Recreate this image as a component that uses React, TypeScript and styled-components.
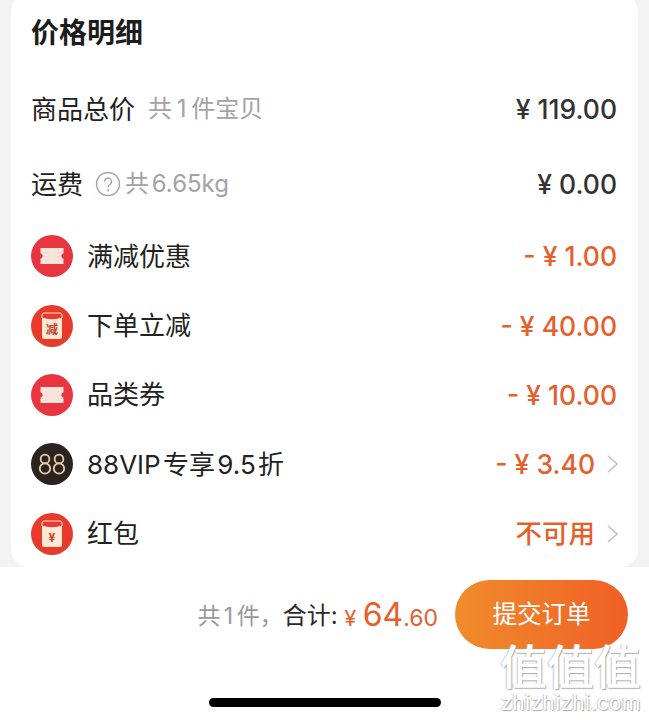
import { ReactNode } from "react";
import styled, { createGlobalStyle } from "styled-components";

const GlobalStyle = createGlobalStyle`
  html, body {
    margin: 0;
    padding: 0;
    background: #fff;
  }
  * { box-sizing: border-box; }
`;

const FONT = `Inter, "Noto Sans CJK SC", sans-serif`;

const Page = styled.div`
  position: relative;
  width: 649px;
  height: 720px;
  overflow: hidden;
  background: #fff;
  font-family: ${FONT};
  color: #222;
`;

const CardArea = styled.div`
  height: 567px;
  padding: 0 11px;
  background: #f3f3f3;
  overflow: hidden;
`;

const Card = styled.section`
  height: 573px;
  margin-top: -6px;
  padding: 6px 21px 0 20px;
  background: #fff;
  border-radius: 18px;
  display: flex;
  flex-direction: column;
`;

const Title = styled.h2`
  height: 71.5px;
  margin: 0;
  padding-bottom: 9.5px;
  flex-shrink: 0;
  display: flex;
  align-items: center;
  font-size: 28px;
  font-weight: 700;
  color: #1c1c1c;
`;

const Row = styled.div<{ $tall?: boolean }>`
  height: ${({ $tall }) => ($tall ? 75 : 69.4)}px;
  flex-shrink: 0;
  display: flex;
  align-items: center;
`;

const Label = styled.span`
  padding-bottom: 4px;
  font-size: 26px;
  word-spacing: -5px;
  color: #222;
`;

const Note = styled.span<{ $tight?: boolean }>`
  padding-bottom: 6px;
  font-size: 24px;
  word-spacing: ${({ $tight }) => ($tight ? -4 : -2)}px;
  color: #a3a3a3;
`;

const Left = styled.div<{ $gap: number }>`
  flex: 1;
  display: flex;
  align-items: center;
  gap: ${({ $gap }) => $gap}px;
`;

const Amount = styled.span<{ $accent?: boolean; $cjk?: boolean }>`
  padding-bottom: ${({ $cjk }) => ($cjk ? 5 : 0)}px;
  font-size: 26.5px;
  font-weight: 500;
  white-space: pre;
  color: ${({ $accent }) => ($accent ? "#e5602c" : "#333")};
`;

const NoteIcon = styled.svg`
  width: 26px;
  height: 26px;
  flex-shrink: 0;
  margin-right: -8px;
`;

const Chevron = styled.svg`
  width: 11px;
  height: 18px;
  margin: 0 -1px 0 12px;
  flex-shrink: 0;
`;

const BadgeWrap = styled.svg`
  width: 42px;
  height: 42px;
  flex-shrink: 0;
`;

const Bar = styled.footer`
  height: 153px;
  padding: 13px 21px 0 0;
  display: flex;
  flex-direction: column;
  align-items: center;
`;

const BarRow = styled.div`
  width: 100%;
  display: flex;
  align-items: center;
  justify-content: flex-end;
`;

const Total = styled.div`
  display: flex;
  align-items: baseline;
  margin-right: 17px;
  white-space: pre;
`;

const Count = styled.span`
  font-size: 23px;
  word-spacing: -3px;
  color: #999;
  transform: translateY(-2px);
`;

const Sum = styled.span`
  font-size: 24px;
  color: #2a2a2a;
  transform: translateY(-2px);
`;

const Price = styled.span<{ $size: number }>`
  font-size: ${({ $size }) => $size}px;
  color: #e5602c;
`;

const Submit = styled.button`
  width: 173px;
  height: 69px;
  border: 0;
  padding: 0 0 4px;
  border-radius: 35px;
  background: linear-gradient(90deg, #f08c2c, #f05f26);
  color: #fff;
  font-family: ${FONT};
  font-size: 24.5px;
`;

const HomeIndicator = styled.div`
  width: 232px;
  height: 9px;
  margin: 49px 0 0 21px;
  border-radius: 5px;
  background: #000;
`;

const Watermark = styled.div`
  position: absolute;
  right: 8px;
  bottom: 6px;
  display: flex;
  flex-direction: column;
  align-items: center;
  color: #fff;
  font-family: ${FONT};
  text-shadow: 1px 1px 1px #a8a8a8, -1px 0 1px #c8c8c8;
  pointer-events: none;
`;

const WatermarkMark = styled.span`
  font-size: 47px;
  line-height: 50px;
  font-weight: 500;
`;

const WatermarkUrl = styled.span`
  font-size: 21px;
  line-height: 22px;
  letter-spacing: 0.3px;
`;

function Ticket({ color }: { color: string }) {
  return (
    <BadgeWrap viewBox="0 0 42 42">
      <circle cx="21" cy="21" r="21" fill={color} />
      <path
        d="M9.500 13h23v5.200a2.900 2.900 0 0 0 0 5.600V29h-23v-5.200a2.900 2.900 0 0 0 0-5.600z"
        fill="#f8e4da"
      />
      <path d="M15 13v16M27 13v16" stroke="#f2c9bd" strokeWidth="1" strokeDasharray="2 2" />
    </BadgeWrap>
  );
}

function Envelope({ mark }: { mark: string }) {
  return (
    <BadgeWrap viewBox="0 0 42 42">
      <circle cx="21" cy="21" r="21" fill="#e8392a" />
      <rect x="11" y="8" width="20" height="26" rx="2" fill="#fbe9d4" />
      <path
        d="M11 10a2 2 0 0 1 2-2h16a2 2 0 0 1 2 2v3q-10 3.500-20 0z"
        fill="#e8392a"
        stroke="#fbe9d4"
        strokeWidth="1"
      />
      <text x="21" y="29" textAnchor="middle" fontSize="12" fontWeight="700" fill="#c9402c" fontFamily={FONT}>
        {mark}
      </text>
    </BadgeWrap>
  );
}

function VipBadge() {
  return (
    <BadgeWrap viewBox="0 0 42 42">
      <circle cx="21" cy="21" r="21" fill="#2a2320" />
      <g fill="none" stroke="#e6cda6" strokeWidth="1.8">
        <circle cx="14" cy="16" r="4.400" />
        <circle cx="14" cy="25.500" r="5.200" />
        <circle cx="28" cy="16" r="4.400" />
        <circle cx="28" cy="25.500" r="5.200" />
      </g>
    </BadgeWrap>
  );
}

function Arrow() {
  return (
    <Chevron viewBox="0 0 11 18">
      <path d="M1 1l9 8-9 8" fill="none" stroke="#c2c2c2" strokeWidth="1.6" />
    </Chevron>
  );
}

type Discount = {
  icon: ReactNode;
  label: string;
  value: string;
  arrow?: boolean;
  cjk?: boolean;
};

const discounts: Discount[] = [
  { icon: <Ticket color="#e8353f" />, label: "满减优惠", value: "- ¥ 1.00" },
  { icon: <Envelope mark="减" />, label: "下单立减", value: "- ¥ 40.00" },
  { icon: <Ticket color="#e8353f" />, label: "品类券", value: "- ¥ 10.00" },
  { icon: <VipBadge />, label: "88VIP 专享 9.5 折", value: "- ¥ 3.40", arrow: true },
  { icon: <Envelope mark="¥" />, label: "红包", value: "不可用", arrow: true, cjk: true },
];

export default function App() {
  return (
    <Page>
      <GlobalStyle />
      <CardArea>
        <Card>
          <Title>价格明细</Title>
          <Row $tall>
            <Left $gap={13}>
              <Label>商品总价</Label>
              <Note>共 1 件宝贝</Note>
            </Left>
            <Amount>¥ 119.00</Amount>
          </Row>
          <Row $tall>
            <Left $gap={12}>
              <Label>运费</Label>
              <NoteIcon viewBox="0 0 26 26">
                <circle cx="13" cy="13" r="11.500" fill="none" stroke="#a3a3a3" strokeWidth="1.4" />
                <path
                  d="M9.500 10.500a3.500 3.500 0 1 1 5.400 3c-1.300.8-1.900 1.400-1.900 2.800"
                  fill="none"
                  stroke="#a3a3a3"
                  strokeWidth="1.4"
                />
                <circle cx="13" cy="19.300" r="1" fill="#a3a3a3" />
              </NoteIcon>
              <Note $tight>共 6.65kg</Note>
            </Left>
            <Amount>¥ 0.00</Amount>
          </Row>
          {discounts.map((d) => (
            <Row key={d.label}>
              <Left $gap={14}>
                {d.icon}
                <Label>{d.label}</Label>
              </Left>
              <Amount $accent $cjk={d.cjk}>
                {d.value}
              </Amount>
              {d.arrow ? <Arrow /> : null}
            </Row>
          ))}
        </Card>
      </CardArea>
      <Bar>
        <BarRow>
          <Total>
            <Count>共 1 件，</Count>
            <Sum>合计: </Sum>
            <Price $size={22}>¥ </Price>
            <Price $size={32}>64</Price>
            <Price $size={23}>.60</Price>
          </Total>
          <Submit>提交订单</Submit>
        </BarRow>
        <HomeIndicator />
      </Bar>
      <Watermark>
        <WatermarkMark>值值值</WatermarkMark>
        <WatermarkUrl>zhizhizhi.com</WatermarkUrl>
      </Watermark>
    </Page>
  );
}
